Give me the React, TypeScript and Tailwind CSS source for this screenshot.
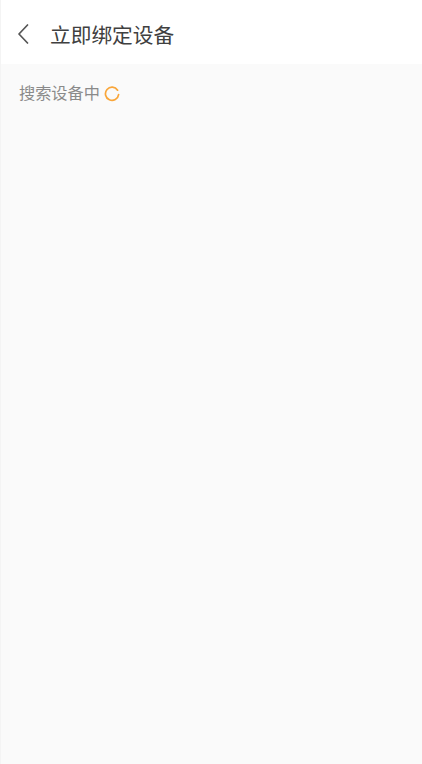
export default function App() {
  return (
    <div
      className="flex h-[764px] w-[422px] flex-col overflow-hidden bg-[#fafafa] border-l border-[#f4f4f4]"
      style={{ fontFamily: '"Noto Sans CJK SC", sans-serif' }}
    >
      <header className="flex h-[64px] shrink-0 items-center bg-white pt-[4px] pl-[15px]">
        <svg width="14" height="20" viewBox="0 0 14 20" fill="none" stroke="#555555" strokeWidth="1.7" strokeLinecap="round" strokeLinejoin="round">
          <path d="M11.5 1 L3 10 L11.5 19" />
        </svg>
        <h1 className="ml-[20px] text-[20.7px] font-normal leading-none text-[#404040]">立即绑定设备</h1>
      </header>
      <div className="flex items-center pl-[18px] pt-[18px]">
        <span className="text-[16.2px] leading-[20px] text-[#8a8a8a]">搜索设备中</span>
        <svg className="ml-[4px] mt-[4px]" width="16" height="16" viewBox="0 0 16 16" fill="none" stroke="#f9a63a" strokeWidth="1.7" strokeLinecap="round">
          <path d="M13.6 4.2 A6.6 6.6 0 1 0 14.6 8.6" />
        </svg>
      </div>
    </div>
  );
}
